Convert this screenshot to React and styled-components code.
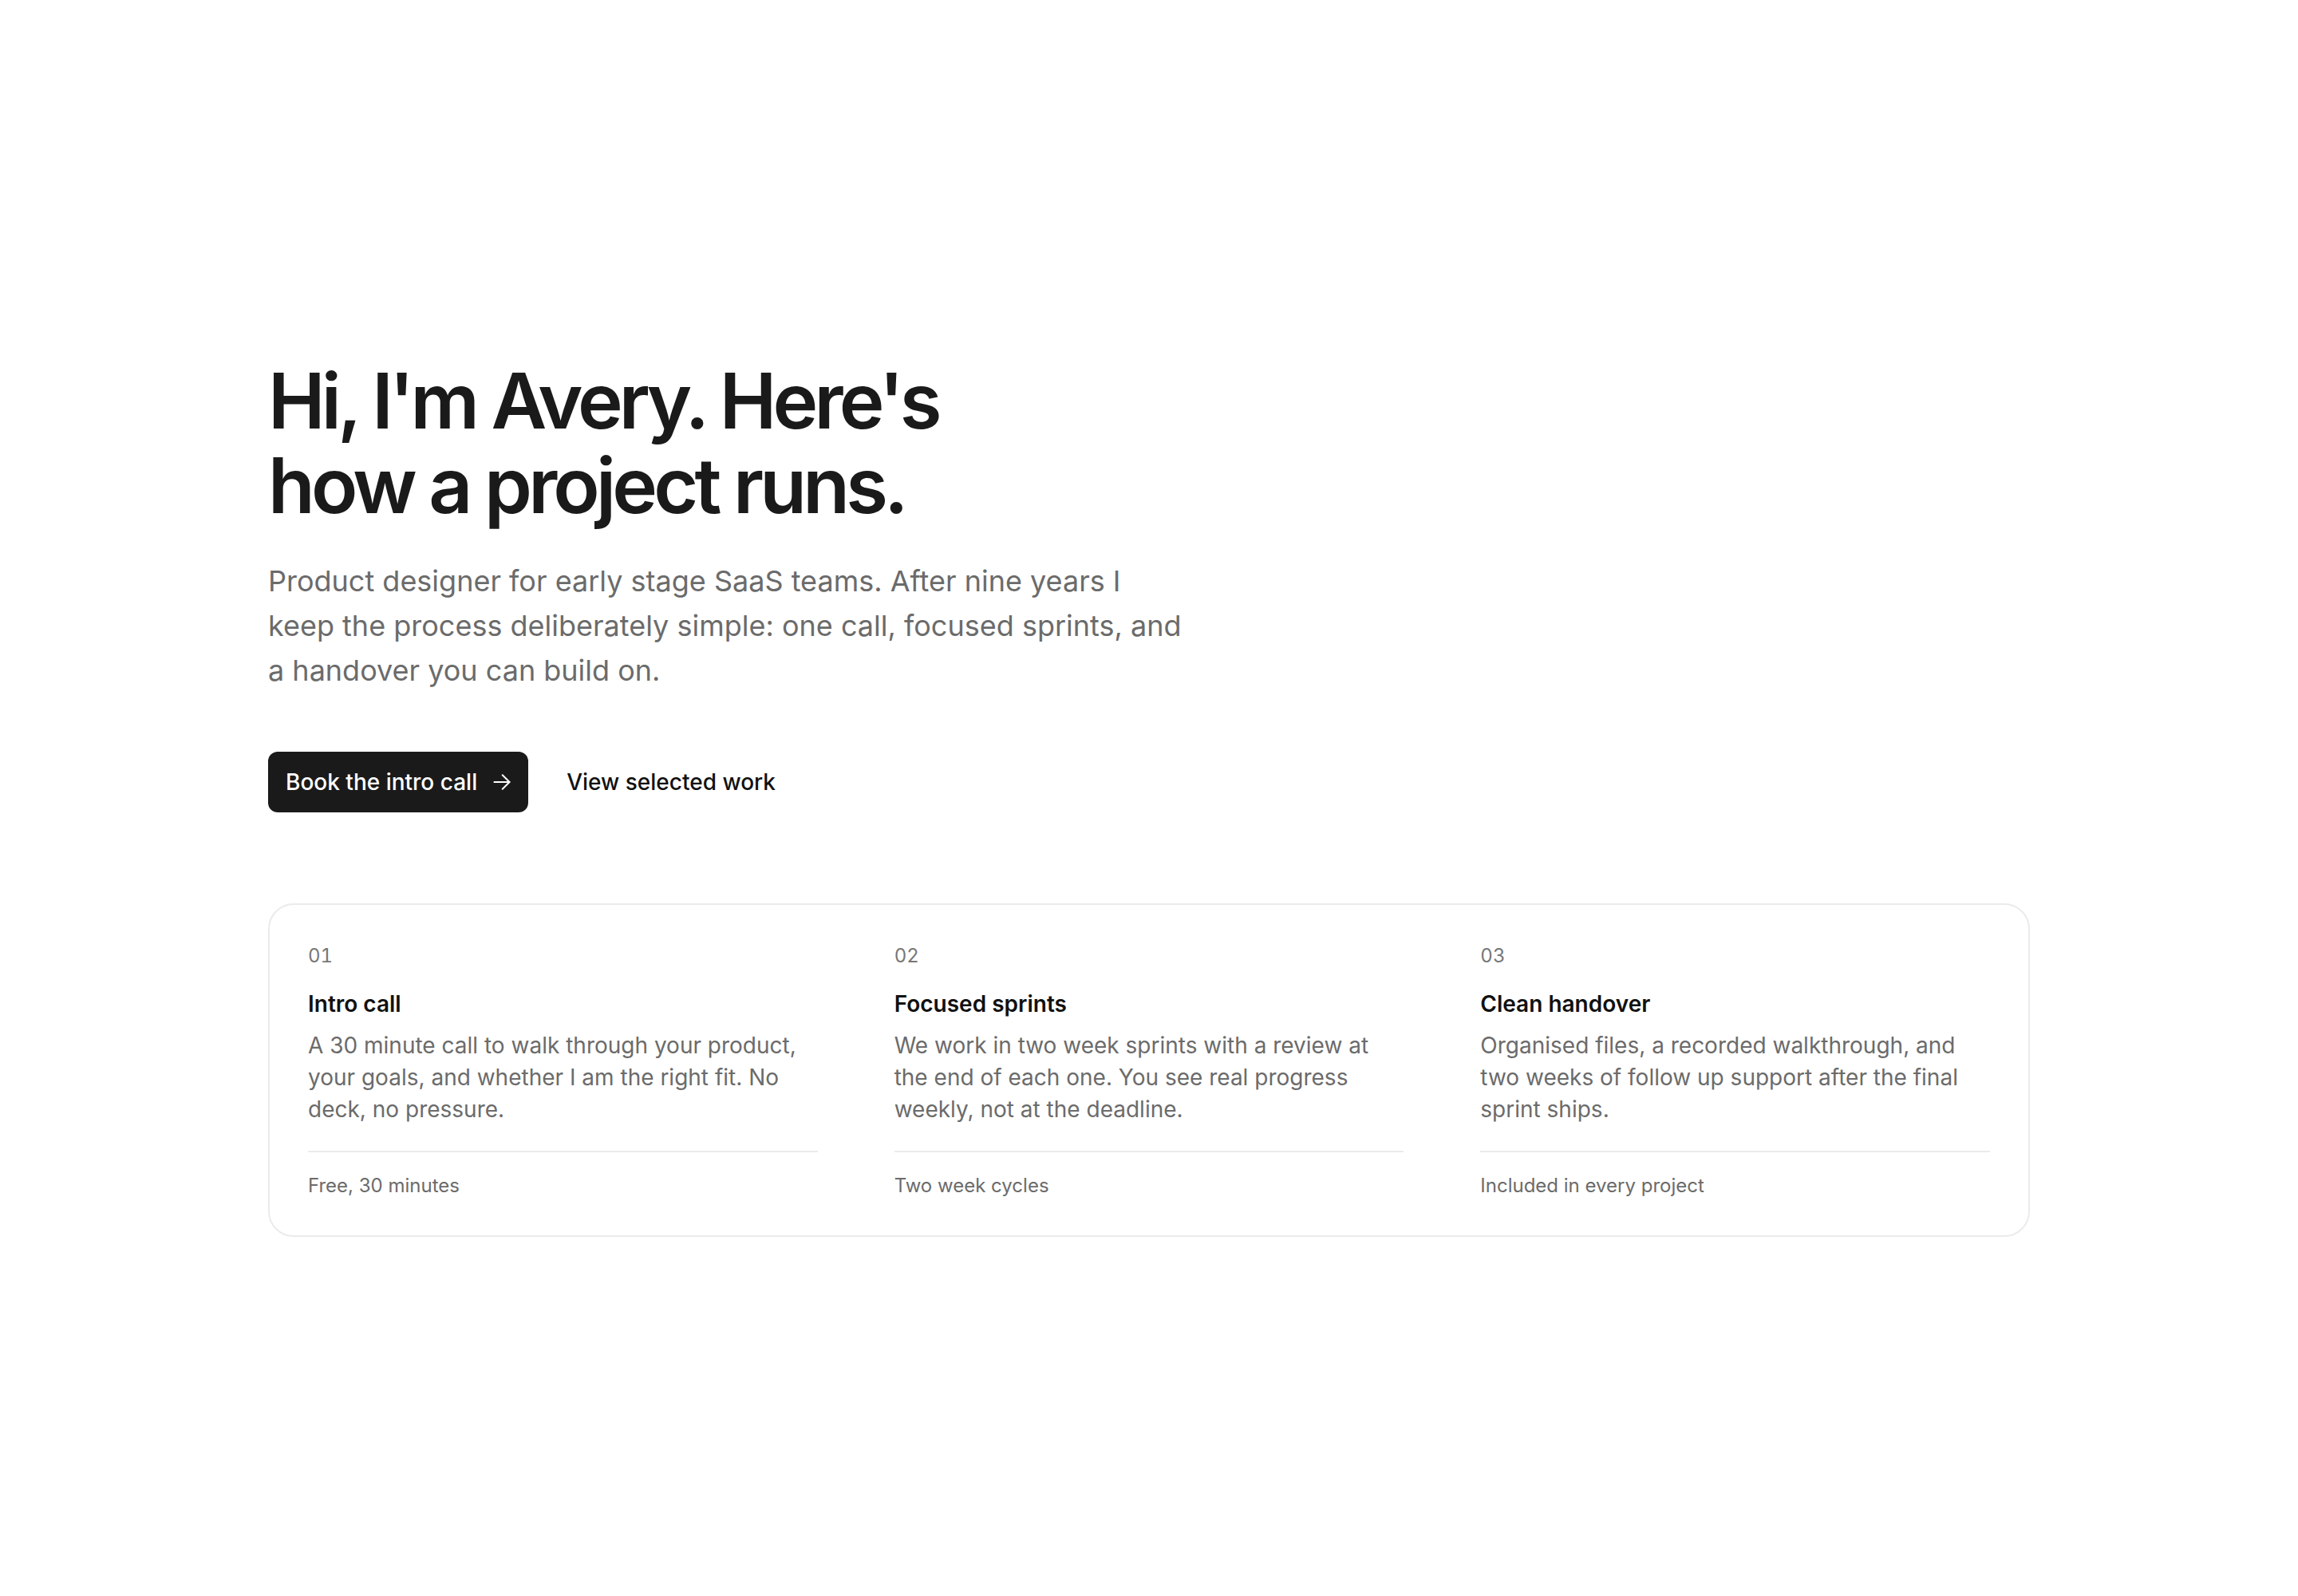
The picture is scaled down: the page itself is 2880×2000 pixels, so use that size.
import styled, { createGlobalStyle } from "styled-components";

const steps = [
  {
    num: "01",
    title: "Intro call",
    text: "A 30 minute call to walk through your product, your goals, and whether I am the right fit. No deck, no pressure.",
    meta: "Free, 30 minutes",
  },
  {
    num: "02",
    title: "Focused sprints",
    text: "We work in two week sprints with a review at the end of each one. You see real progress weekly, not at the deadline.",
    meta: "Two week cycles",
  },
  {
    num: "03",
    title: "Clean handover",
    text: "Organised files, a recorded walkthrough, and two weeks of follow up support after the final sprint ships.",
    meta: "Included in every project",
  },
];

const GlobalStyle = createGlobalStyle`
  * { box-sizing: border-box; }
  body {
    margin: 0;
    background: #ffffff;
    color: #1a1a1a;
    font-family: Inter, "Noto Sans", sans-serif;
    -webkit-font-smoothing: antialiased;
  }
`;

const Arrow = () => (
  <svg width="22" height="22" viewBox="0 0 12 12" fill="none" stroke="currentColor"
    strokeWidth="1.1" strokeLinecap="round" strokeLinejoin="round">
    <path d="M0.8 6h10.4" />
    <path d="M6.4 1.2 11.2 6 6.4 10.8" />
  </svg>
);

const App = () => {
  return (
    <>
      <GlobalStyle />
      <Page>
        <Container>
          <Heading>Hi, I'm Avery. Here's how a project runs.</Heading>
          <Lead>
            Product designer for early stage SaaS teams. After nine years I keep the process
            deliberately simple: one call, focused sprints, and a handover you can build on.
          </Lead>
          <Actions>
            <PrimaryButton type="button">
              Book the intro call
              <Arrow />
            </PrimaryButton>
            <TextLink href="#work">View selected work</TextLink>
          </Actions>
          <StepsCard>
            {steps.map(step => (
              <Step key={step.num}>
                <StepNum>{step.num}</StepNum>
                <StepTitle>{step.title}</StepTitle>
                <StepText>{step.text}</StepText>
                <StepMeta>{step.meta}</StepMeta>
              </Step>
            ))}
          </StepsCard>
        </Container>
      </Page>
    </>
  );
};

const Page = styled.main`
  min-height: 100vh;
  display: flex;
  align-items: center;
  justify-content: center;
  padding: 0 48px;
`;
const Container = styled.div`
  width: 100%;
  max-width: 2208px;
  display: flex;
  flex-direction: column;
  align-items: flex-start;
`;
const Heading = styled.h1`
  margin: 0 0 38px;
  max-width: 1000px;
  font-size: 96px;
  line-height: 1.1;
  font-weight: 600;
  letter-spacing: -0.05em;
  color: #1a1a1a;
`;
const Lead = styled.p`
  margin: 0;
  max-width: 1152px;
  font-size: 36px;
  line-height: 56px;
  color: #6b6b6b;
`;
const Actions = styled.div`
  margin-top: 74px;
  display: flex;
  align-items: center;
  gap: 48px;
`;
const PrimaryButton = styled.button`
  display: inline-flex;
  align-items: center;
  gap: 20px;
  height: 76px;
  padding: 0 22px 0 22px;
  border: none;
  border-radius: 12px;
  background: #1a1a1a;
  color: #ffffff;
  font-family: inherit;
  font-size: 28px;
  font-weight: 500;
  cursor: pointer;
`;
const TextLink = styled.a`
  color: #111111;
  font-size: 28px;
  font-weight: 500;
  text-decoration: none;
`;
const StepsCard = styled.section`
  margin-top: 114px;
  width: 100%;
  display: grid;
  grid-template-columns: repeat(3, 1fr);
  gap: 96px;
  padding: 48px 48px 48px;
  border: 2px solid #ebebeb;
  border-radius: 32px;
`;
const Step = styled.article`
  display: flex;
  flex-direction: column;
`;
const StepNum = styled.span`
  font-size: 24px;
  line-height: 32px;
  color: #777777;
  font-variant-numeric: tabular-nums;
`;
const StepTitle = styled.h3`
  margin: 24px 0 12px;
  font-size: 28px;
  line-height: 40px;
  font-weight: 600;
  color: #111111;
`;
const StepText = styled.p`
  margin: 0;
  font-size: 28px;
  line-height: 40px;
  color: #6b6b6b;
`;
const StepMeta = styled.div`
  margin-top: 32px;
  padding-top: 28px;
  border-top: 2px solid #ebebeb;
  font-size: 24px;
  line-height: 28px;
  color: #6b6b6b;
`;

export default App;
